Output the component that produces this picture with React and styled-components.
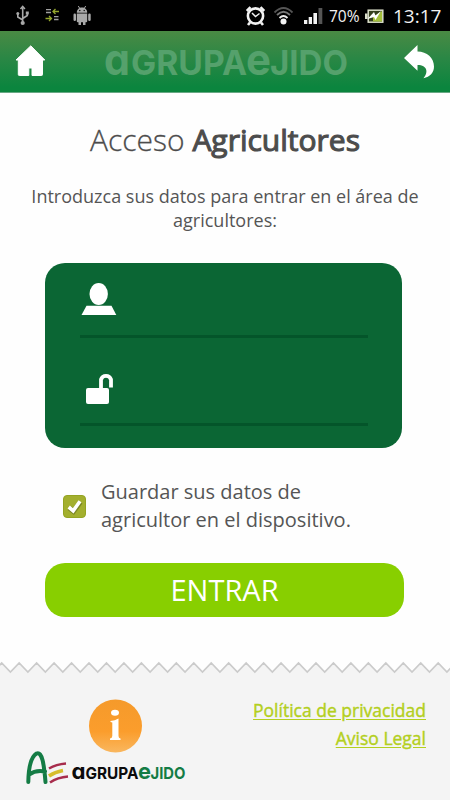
import React, { useState } from 'react';
import styled, { createGlobalStyle } from 'styled-components';

const GlobalStyle = createGlobalStyle`
  * {
    box-sizing: border-box;
  }

  body {
    margin: 0;
    background: #ffffff;
    font-family: 'Open Sans', 'Noto Sans', sans-serif;
    color: #555555;
  }
`;

const Screen = styled.div`
  display: flex;
  flex-direction: column;
  width: 450px;
  height: 800px;
  overflow: hidden;
  background: #fefefe;
`;

const StatusBar = styled.div`
  display: flex;
  justify-content: space-between;
  flex: none;
  height: 31px;
  background: #000000;
`;

const StatusText = styled.span`
  width: ${({ $width }) => $width};
  margin-left: ${({ $gap }) => $gap};
  font-size: ${({ $size }) => $size};
  line-height: 32px;
  white-space: nowrap;
  color: #f2f2f2;
`;

const StatusGroup = styled.div`
  display: flex;
`;

const Header = styled.header`
  display: flex;
  align-items: flex-start;
  justify-content: space-between;
  flex: none;
  height: 62px;
  padding: 13px 14px 0 14px;
  background: linear-gradient(#4a8a44, #2a8745 45%, #0b853e 92%);
  border-bottom: 1px solid #68a884;
`;

const IconButton = styled.button`
  display: block;
  padding: 0;
  border: 0;
  background: none;
  line-height: 0;
`;

const Main = styled.main`
  display: flex;
  flex-direction: column;
  flex: none;
  height: 567px;
  padding: 0 45px;
`;

const Title = styled.h1`
  margin: 25px 0 0;
  font-size: 30px;
  font-weight: 300;
  line-height: 44px;
  text-align: center;
  white-space: nowrap;
  color: #4c4c4c;
  -webkit-text-stroke: 0.3px #4c4c4c;
`;

const TitleStrong = styled.span`
  font-weight: 400;
  -webkit-text-stroke: 1.1px #4c4c4c;
`;

const Intro = styled.p`
  margin: 22px -20px 0;
  font-size: 18px;
  line-height: 24px;
  text-align: center;
`;

const LoginCard = styled.div`
  width: 357px;
  height: 185px;
  margin-top: 31px;
  padding: 0 34px 0 35px;
  border-radius: 20px;
  background: #0b6634;
`;

const Field = styled.label`
  display: flex;
  align-items: flex-start;
  height: ${({ $height }) => $height};
  padding-top: ${({ $top }) => $top};
  border-bottom: 3px solid #04552a;
`;

const FieldInput = styled.input`
  flex: 1;
  min-width: 0;
  height: 36px;
  border: 0;
  outline: 0;
  background: transparent;
  font: inherit;
  color: #ffffff;
`;

const RememberRow = styled.label`
  display: flex;
  align-items: center;
  gap: 15px;
  margin: 30px 0 0 18px;
  font-size: 20px;
  line-height: 28px;
`;

const CheckBox = styled.button`
  display: block;
  flex: none;
  width: 23px;
  height: 23px;
  padding: 0;
  border: 1px solid #94a422;
  border-radius: 4px;
  background: #a3af2e;
  line-height: 0;
`;

const RememberText = styled.span`
  width: 270px;
`;

const SubmitButton = styled.button`
  width: 359px;
  height: 54px;
  margin-top: 29px;
  padding: 0 0 1px;
  border: 0;
  border-radius: 20px;
  background: #88cf00;
  font-family: inherit;
  font-size: 29px;
  color: #ffffff;
`;

const Footer = styled.footer`
  display: flex;
  flex-direction: column;
  flex: 1;
`;

const FooterBody = styled.div`
  display: flex;
  justify-content: space-between;
  flex: 1;
  padding: 0 24px 0 24px;
  background: #f4f4f4;
`;

const FooterLinks = styled.nav`
  display: flex;
  flex-direction: column;
  align-items: flex-end;
  padding-top: 21px;
`;

const FooterLink = styled.a`
  font-size: 17.5px;
  line-height: 27.5px;
  white-space: nowrap;
  color: #b3cf20;
  -webkit-text-stroke: 0.4px #b3cf20;
  text-decoration: underline;
  text-underline-offset: 2px;
`;

const Wordmark = styled.text`
  font-family: 'Inter', 'Open Sans', sans-serif;
  font-weight: 700;
  font-feature-settings: 'cv11';
`;

const NotificationIcons = () => (
  <svg width="110" height="31" viewBox="0 0 110 31">
    {/* usb */}
    <g fill="none" stroke="#a9a9a9" strokeWidth="1.6">
      <path d="M22.7 8V23M17.8 13V17L22.7 20M27.3 12.500V15.500L22.700 18.500" />
      <path d="M20.500 9L22.700 6.500L24.900 9" />
    </g>
    <circle cx="22.7" cy="23" r="2.1" fill="#a9a9a9" />
    <circle cx="17.8" cy="13.500" r="1.500" fill="#a9a9a9" />
    <path d="M25.800 11.500H28.800V14.500H25.800Z" fill="#a9a9a9" />
    {/* data transfer */}
    <g fill="none" strokeWidth="1.3">
      <path d="M46 9.700H51M46 12.500H51M54 16.700H58.500M54 19.500H58.500" stroke="#a0a0a0" />
      <path d="M59 11.500H53M55.500 9L53 11.500L55.500 14M45.500 18.500H51.500M49 16L51.500 18.500L49 21" stroke="#94a62d" />
    </g>
    {/* android */}
    <g fill="#a9a9a9">
      <path d="M76.800 12.700C76.800 9.500 79 7.500 82 7.500S87.200 9.500 87.200 12.700Z" />
      <path d="M76.800 13.500H87.200V21.200Q87.200 22.200 86.200 22.200H85.500V25H83V22.200H81V25H78.500V22.200H77.800Q76.800 22.200 76.800 21.200Z" />
      <rect x="73.500" y="13.500" width="2.500" height="7.500" rx="1.200" />
      <rect x="88.200" y="13.500" width="2.500" height="7.500" rx="1.200" />
      <path d="M78.300 6L79.800 8.500M85.700 6L84.200 8.500" stroke="#a9a9a9" />
    </g>
    <circle cx="79.800" cy="10.500" r=".7" />
    <circle cx="84.200" cy="10.500" r=".7" />
  </svg>
);

const SystemIcons = () => (
  <svg width="86" height="31" viewBox="240 0 86 31">
    {/* alarm */}
    <g fill="none" stroke="#f2f2f2">
      <circle cx="255.500" cy="16" r="7.600" strokeWidth="2.600" />
      <path d="M252 13L255.500 16.500L259.500 13.500" strokeWidth="1.500" />
      <path d="M246.800 11L250.500 7.200M264.200 11L260.500 7.200M250 22.500L248 25M261 22.500L263 25" strokeWidth="2.600" />
    </g>
    {/* wifi */}
    <g fill="none" strokeWidth="1.800">
      <path d="M274.500 12.500Q283.500 3.500 292.500 12.500" stroke="#555" />
      <path d="M277 15Q283.500 8.500 290 15" stroke="#777" />
      <path d="M279.500 18Q283.500 14 287.500 18" stroke="#eee" />
    </g>
    <circle cx="283.500" cy="21.500" r="3" fill="#f4f4f4" />
    {/* signal */}
    <g fill="#f2f2f2">
      <rect x="304" y="20" width="3.300" height="4" />
      <rect x="308.700" y="17" width="3.300" height="7" />
      <rect x="313.400" y="13" width="3.600" height="11" />
      <rect x="318.500" y="8" width="3.800" height="16" fill="#555" />
    </g>
  </svg>
);

const BatteryIcon = () => (
  <svg width="20" height="31" viewBox="364 0 20 31">
    <rect x="368.200" y="10.200" width="14.600" height="12" fill="#35401d" stroke="#dce0cb" strokeWidth="1.500" />
    <rect x="365" y="13.500" width="2.500" height="5.500" fill="#dce0cb" />
    <path d="M373 21.500V17L382 11V21.500Z" fill="#a4bf3b" />
    <path d="M367.500 19L374 12L375.500 15.500L381 11L375.500 20L374 17Z" fill="#fff" />
  </svg>
);

const HomeIcon = () => (
  <svg width="34" height="34" viewBox="15 44 34 34">
    <path
      d="M31.800 45.800L45.800 60H43.500V74.500Q43.500 75.500 42.500 75.500H33V68H29.800V75.500H20.300Q19.300 75.500 19.300 74.500V60H17Z"
      fill="#fff"
      stroke="#fff"
      strokeLinejoin="round"
    />
  </svg>
);

const BackIcon = () => (
  <svg width="33" height="36" viewBox="403 44 33 36">
    <path
      d="M417.500 45V51.500C427 51.500 434 58 434 66.500C434 72.500 430 77 423.500 78.200C428.500 72.500 427.500 65 417.500 65V70.800L404 58Z"
      fill="#fff"
    />
  </svg>
);

const HeaderLogo = () => (
  <svg width="246" height="36" viewBox="102 44 246 36" fill="#55a16c">
    <Wordmark x="103" y="75" fontSize="44" textLength="26" lengthAdjust="spacingAndGlyphs">a</Wordmark>
    <Wordmark x="130" y="75" fontSize="34" textLength="116" lengthAdjust="spacingAndGlyphs">GRUPA</Wordmark>
    <Wordmark x="245" y="75" fontSize="44" textLength="25" lengthAdjust="spacingAndGlyphs">e</Wordmark>
    <Wordmark x="269" y="75" fontSize="34" textLength="78" lengthAdjust="spacingAndGlyphs">JIDO</Wordmark>
  </svg>
);

const UserIcon = () => (
  <svg width="40" height="36" viewBox="80 282 40 36" fill="#fff">
    <ellipse cx="98.700" cy="294" rx="9.200" ry="11" />
    <path d="M86.500 305.700H111.500L116.300 315H81.500Z" />
  </svg>
);

const LockIcon = () => (
  <svg width="40" height="36" viewBox="80 370 40 36" fill="#fff">
    <rect x="86" y="388" width="23" height="16" rx="2" />
    <path d="M101 388V379.500A5.300 5.300 0 0 1 111 379.500V387.500" fill="none" stroke="#fff" strokeWidth="3.800" />
  </svg>
);

const CheckMark = () => (
  <svg width="21" height="21" viewBox="0 0 21 21" fill="none">
    <path d="M5.200 12L9.500 15.500L16.500 6" stroke="#7c8724" strokeWidth="5" />
    <path d="M4.700 11L9.200 14.800L16 5.200" stroke="#fff" strokeWidth="3.600" />
  </svg>
);

const ZIGZAG_STEP = 17.46;

// torn paper edge, built from evenly spaced teeth
const TornEdge = () => {
  const points = [];
  for (let i = -1; i < 27; i += 1) {
    const x = 1.7 + i * ZIGZAG_STEP;
    points.push(`${x.toFixed(2)},3`, `${(x + ZIGZAG_STEP / 2).toFixed(2)},12`);
  }

  return (
    <svg width="450" height="16" viewBox="0 0 450 16" style={{ display: 'block' }}>
      <polygon points={`-20,16 ${points.join(' ')} 480,16`} fill="#f4f4f4" />
      <polyline points={points.join(' ')} fill="none" stroke="#cbcbcb" strokeWidth="1.700" />
    </svg>
  );
};

const FooterLogo = () => (
  <svg width="166" height="118" viewBox="24 676 166 118">
    <defs>
      <linearGradient id="info" x1="0" y1="0" x2="0" y2="1">
        <stop offset="0" stopColor="#f59a2b" />
        <stop offset="0.6" stopColor="#fb9d2c" />
        <stop offset="1" stopColor="#f9b75f" />
      </linearGradient>
    </defs>
    <circle cx="115.500" cy="726" r="26.500" fill="url(#info)" />
    <ellipse cx="115" cy="712.700" rx="4" ry="3" fill="#fff" />
    <path d="M110.500 721Q115 720.500 118.500 718.500V736Q118.500 738 120.500 738.500V740H110V738.500Q112.300 738 112.300 736V722.500L110.500 722Z" fill="#fff" />
    <path d="M28.300 782C28.500 769 31 757 36.500 753.500C42 751 44 764 45.500 782M29 774.500C34 771 40 770.500 45 771.500" fill="none" stroke="#147c45" strokeWidth="4" strokeLinecap="round" />
    <path d="M49 768.500C55 765 60 764 66 763.500M50 782.500C56 778.500 62 777 68 776.500" fill="none" stroke="#a72c4c" strokeWidth="2.600" />
    <path d="M49 776C54 772.500 57 771.500 63 770.500" fill="none" stroke="#d6bd2c" strokeWidth="3.600" />
    <g fill="#0b0b0b">
      <Wordmark x="71.500" y="778.500" fontSize="22" textLength="14" lengthAdjust="spacingAndGlyphs">a</Wordmark>
      <Wordmark x="85.500" y="778.500" fontSize="16.500" textLength="53" lengthAdjust="spacingAndGlyphs">GRUPA</Wordmark>
    </g>
    <g fill="#147c45">
      <Wordmark x="138" y="778.500" fontSize="22" textLength="13" lengthAdjust="spacingAndGlyphs">e</Wordmark>
      <Wordmark x="150.500" y="778.500" fontSize="16.500" textLength="35" lengthAdjust="spacingAndGlyphs">JIDO</Wordmark>
    </g>
  </svg>
);

const App = () => {
  const [remember, setRemember] = useState(true);

  return (
    <>
      <GlobalStyle />
      <Screen>
        <StatusBar>
          <NotificationIcons />
          <StatusGroup>
            <SystemIcons />
            <StatusText $size="15.500px" $gap="3px" $width="35px">70%</StatusText>
            <BatteryIcon />
            <StatusText $size="19px" $gap="9px" $width="57px">13:17</StatusText>
          </StatusGroup>
        </StatusBar>

        <Header>
          <IconButton><HomeIcon /></IconButton>
          <HeaderLogo />
          <IconButton><BackIcon /></IconButton>
        </Header>

        <Main>
          <Title>Acceso <TitleStrong>Agricultores</TitleStrong></Title>
          <Intro>Introduzca sus datos para entrar en el área de agricultores:</Intro>

          <LoginCard>
            <Field $height="75px" $top="19px">
              <UserIcon />
              <FieldInput type="text" />
            </Field>
            <Field $height="88px" $top="32px">
              <LockIcon />
              <FieldInput type="password" />
            </Field>
          </LoginCard>

          <RememberRow>
            <CheckBox type="button" onClick={() => setRemember(!remember)}>
              {remember && <CheckMark />}
            </CheckBox>
            <RememberText>Guardar sus datos de agricultor en el dispositivo.</RememberText>
          </RememberRow>

          <SubmitButton type="submit">ENTRAR</SubmitButton>
        </Main>

        <Footer>
          <TornEdge />
          <FooterBody>
            <FooterLogo />
            <FooterLinks>
              <FooterLink>Política de privacidad</FooterLink>
              <FooterLink>Aviso Legal</FooterLink>
            </FooterLinks>
          </FooterBody>
        </Footer>
      </Screen>
    </>
  );
};

export default App;
